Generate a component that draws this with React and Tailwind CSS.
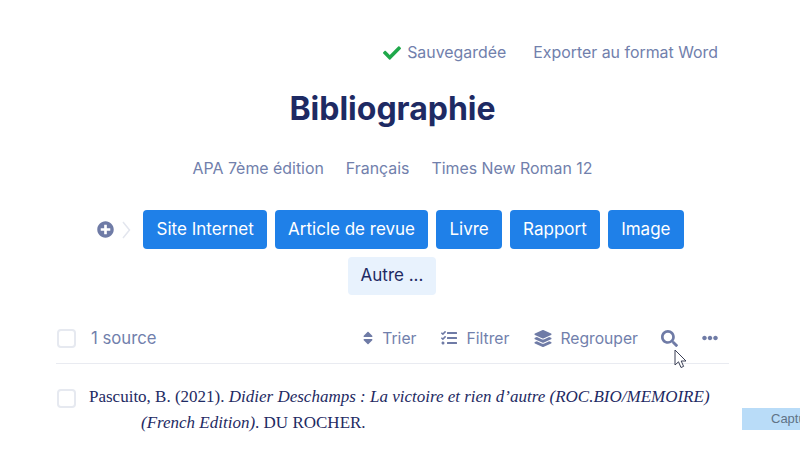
import React from "react";
import { FaCheck, FaPlusCircle, FaSort, FaTasks, FaLayerGroup, FaSearch, FaEllipsisH } from "react-icons/fa";

const types = ["Site Internet", "Article de revue", "Livre", "Rapport", "Image"];

function Box() {
  return <span className="block w-[19px] h-[19px] shrink-0 rounded-[4px] border-2 border-[#e6e9f0] bg-white" />;
}

function Tool({ icon, label, className }) {
  return (
    <span className={"flex items-center gap-2 " + className}>
      {icon}
      <span>{label}</span>
    </span>
  );
}

export default function App() {
  return (
    <div className="relative w-[800px] h-[453px] overflow-hidden bg-white pl-[56px] pr-[71px] pt-[41px] font-['Inter',sans-serif] text-[15.9px] text-[#7180ac]">
      <div className="flex justify-end items-center h-6 pr-[11px]">
        <FaCheck className="text-[#1fa84a] w-[18px] h-[18px] mr-[6px]" />
        <span>Sauvegardée</span>
        <span className="ml-[27px]">Exporter au format Word</span>
      </div>

      <h1 className="mt-[24px] h-10 leading-10 text-center text-[32px] font-bold text-[#1e2a63]">
        Bibliographie
      </h1>

      <div className="mt-[28px] flex justify-center gap-[22px] h-6 leading-6">
        <span>APA 7ème édition</span>
        <span>Français</span>
        <span>Times New Roman 12</span>
      </div>

      <div className="mt-[29px] pl-[38px] pr-[42px] flex flex-wrap justify-center items-center gap-2 text-[17px]">
        <span className="flex items-center mr-[4px]">
          <FaPlusCircle className="w-[17px] h-[17px] text-[#6f7ba6]" />
          <svg width="9" height="18" viewBox="0 0 9 18" className="ml-[8px]" fill="none" stroke="#e3e6ee" strokeWidth="1.5">
            <path d="M1 1l6.5 8L1 17" />
          </svg>
        </span>
        {types.map((t) => (
          <button key={t} className="h-[39px] px-[13.2px] rounded-[4px] bg-[#1f80e8] text-white">
            {t}
          </button>
        ))}
        <button className="ml-[3px] h-[38px] px-[13px] rounded-[4px] bg-[#e8f2fd] text-[#1e2a63]">Autre ...</button>
      </div>

      <div className="mt-[23px] h-[46px] pb-[4px] flex items-center border-b border-[#e9ebf1] pl-px pr-[11px]">
        <Box />
        <span className="ml-[15px] text-[16.7px]">1 source</span>
        <div className="ml-auto flex items-center text-[15.7px]">
          <Tool icon={<FaSort className="w-[10px] h-[16px] text-[#6f7ba6] mr-[1px]" />} label="Trier" />
          <Tool className="ml-[24px]" icon={<FaTasks className="w-[18px] h-[16px] text-[#6f7ba6]" />} label="Filtrer" />
          <Tool className="ml-[25px]" icon={<FaLayerGroup className="w-[18px] h-[17px] text-[#6f7ba6]" />} label="Regrouper" />
          <FaSearch className="ml-[23px] w-[17px] h-[17px] text-[#6f7ba6]" />
          <FaEllipsisH className="ml-[24px] w-[16px] h-[16px] text-[#6f7ba6]" />
        </div>
      </div>

      <div className="mt-[20px] flex pl-px">
        <span className="mt-[5px]"><Box /></span>
        <p className="ml-[13px] pl-[52px] -indent-[52px] text-[17px] leading-[26px] text-[#1e2a63] font-['Liberation_Serif',serif]">
          Pascuito, B. (2021). <i>Didier Deschamps : La victoire et rien d’autre (ROC.BIO/MEMOIRE) (French Edition)</i>. DU ROCHER.
        </p>
      </div>

      <svg className="absolute left-[674px] top-[349px]" width="14" height="20" viewBox="0 0 14 20" fill="#fff" stroke="#3a3f55" strokeWidth="1">
        <path d="M1 1v15l3.5-3.2L7 18.5l2.6-1.1L7.2 12H12z" />
      </svg>

      <div className="absolute left-[742px] top-[408px] w-[58px] h-[22px] overflow-hidden whitespace-nowrap bg-[#b9dcf8] pl-[29px] text-[13px] leading-[22px] text-[#5f7386] font-['Liberation_Sans',sans-serif]">
        Captu
      </div>
    </div>
  );
}
